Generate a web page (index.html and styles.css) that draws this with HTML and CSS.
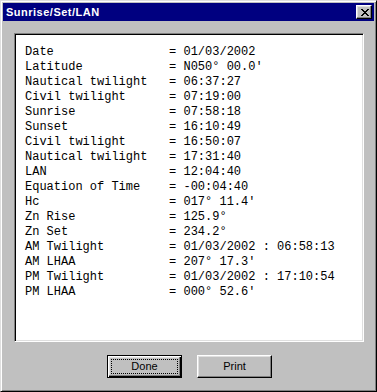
FILE: index.html
```html
<!DOCTYPE html>
<html>
<head>
<meta charset="utf-8">
<title>Sunrise/Set/LAN</title>
<link rel="stylesheet" href="styles.css">
</head>
<body>
<div class="window">
  <div class="titlebar">
    <span class="title">Sunrise/Set/LAN</span>
    <button class="close" type="button" aria-label="Close">
      <svg width="8" height="7" viewBox="0 0 8 7" shape-rendering="crispEdges"><path d="M0 0h2v1H0zM6 0h2v1H6zM1 1h2v1H1zM5 1h2v1H5zM2 2h4v1H2zM3 3h2v1H3zM2 4h4v1H2zM1 5h2v1H1zM5 5h2v1H5zM0 6h2v1H0zM6 6h2v1H6z" fill="#000"/></svg>
    </button>
  </div>
  <div class="client">
    <div class="panel">
<pre class="report">Date                = 01/03/2002
Latitude            = N050° 00.0'
Nautical twilight   = 06:37:27
Civil twilight      = 07:19:00
Sunrise             = 07:58:18
Sunset              = 16:10:49
Civil twilight      = 16:50:07
Nautical twilight   = 17:31:40
LAN                 = 12:04:40
Equation of Time    = -00:04:40
Hc                  = 017° 11.4'
Zn Rise             = 125.9°
Zn Set              = 234.2°
AM Twilight         = 01/03/2002 : 06:58:13
AM LHAA             = 207° 17.3'
PM Twilight         = 01/03/2002 : 17:10:54
PM LHAA             = 000° 52.6'</pre>
    </div>
    <div class="buttons">
      <button class="btn default" type="button"><span class="focus">Done</span></button>
      <button class="btn" type="button"><span class="label">Print</span></button>
    </div>
  </div>
</div>
</body>
</html>
```

FILE: styles.css
```css
html, body {
  margin: 0;
  padding: 0;
  background: #c0c0c0;
}

.window {
  box-sizing: border-box;
  width: 377px;
  height: 392px;
  background: #c0c0c0;
  border: 1px solid;
  border-color: #dfdfdf #000 #000 #dfdfdf;
  box-shadow: inset 1px 1px #fff, inset -1px -1px #808080;
  padding: 2px;
  display: flex;
  flex-direction: column;
}

.titlebar {
  height: 18px;
  flex: none;
  background: #000080;
  display: flex;
  align-items: center;
  justify-content: space-between;
  padding: 0 2px 0 3px;
}

.title {
  color: #fff;
  font-family: "Liberation Sans", Arial, sans-serif;
  font-weight: bold;
  font-size: 11px;
  letter-spacing: 0.5px;
  line-height: 14px;
}

.close {
  box-sizing: border-box;
  width: 16px;
  height: 14px;
  padding: 0 0 0 1px;
  margin: 0;
  background: #c0c0c0;
  border: 1px solid;
  border-color: #fff #000 #000 #fff;
  box-shadow: inset -1px -1px #808080, inset 1px 1px #dfdfdf;
  display: flex;
  align-items: center;
  justify-content: center;
}

.close svg {
  display: block;
}

.client {
  flex: 1;
  display: flex;
  flex-direction: column;
}

.panel {
  box-sizing: border-box;
  height: 309px;
  margin: 12px 10px 0 11px;
  background: #fff;
  border: 1px solid;
  border-color: #808080 #fff #fff #808080;
  box-shadow: inset 1px 1px #000, inset -1px -1px #dfdfdf;
  padding: 11px 0 0 10px;
}

.report {
  margin: 0;
  font-family: "Courier New", "Liberation Mono", monospace;
  font-size: 12px;
  line-height: 15px;
  color: #000;
}

.buttons {
  display: flex;
  justify-content: center;
  gap: 15px;
  margin-top: 13px;
  padding-left: 2px;
}

.btn {
  box-sizing: border-box;
  width: 75px;
  height: 23px;
  margin: 0;
  padding: 0;
  background: #c0c0c0;
  border: 1px solid;
  border-color: #fff #000 #000 #fff;
  box-shadow: inset -1px -1px #808080, inset 1px 1px #dfdfdf;
  font-family: "Liberation Sans", Arial, sans-serif;
  font-size: 11px;
  color: #000;
  display: flex;
  align-items: center;
  justify-content: center;
}

.btn.default {
  border: 1px solid #000;
  box-shadow: inset 1px 1px #fff, inset -1px -1px #000, inset -2px -2px #808080, inset 2px 2px #dfdfdf;
  padding: 3px;
}

.focus {
  box-sizing: border-box;
  flex: 1;
  align-self: stretch;
  border: 1px dotted #000;
  display: flex;
  align-items: center;
  justify-content: center;
  line-height: 13px;
}

.label {
  line-height: 13px;
}
```
